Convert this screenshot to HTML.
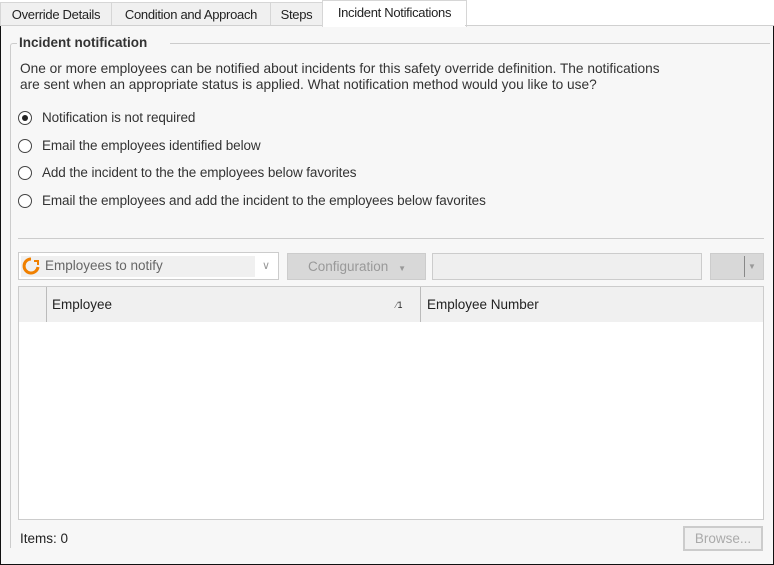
<!DOCTYPE html>
<html><head><style>
body{margin:0;width:774px;height:565px;overflow:hidden;background:#fff;font-family:"Liberation Sans",sans-serif;font-size:13.7px;color:#222;position:relative}
.a{position:absolute}
.tab{position:absolute;top:2px;height:23px;background:#f0f0f0;border:1px solid #d6d6d6;border-bottom:none;line-height:23px;text-align:center;font-size:13px;color:#222;letter-spacing:-0.3px}
.panel{position:absolute;left:0;top:25px;width:772px;height:538px;background:#f7f7f7;border:1px solid #111;border-top:1px solid #d0d0d0}
.rb{position:absolute;left:18px;width:14px;height:14px;border:1px solid #444;border-radius:50%;background:#fff;box-sizing:border-box}
.rt{position:absolute;left:42px;font-size:13.5px;color:#333;letter-spacing:-0.1px}
</style></head><body>
<div class="panel"></div>
<div class="a" style="left:0;top:0;width:774px;height:26px;background:#fff"></div>
<div class="tab" style="left:0;width:110px">Override Details</div>
<div class="tab" style="left:111px;width:158px">Condition and Approach</div>
<div class="tab" style="left:270px;width:51px">Steps</div>
<div class="tab" style="left:322px;width:143px;top:0;height:26px;background:#fff;line-height:24px">Incident Notifications</div>
<div class="a" style="left:0;top:25px;width:322px;border-top:1px solid #d0d0d0"></div>
<div class="a" style="left:465px;top:25px;width:309px;border-top:1px solid #d0d0d0"></div>
<div class="a" style="left:773px;top:26px;width:1px;height:539px;background:#111"></div>
<div class="a" style="left:0;top:26px;width:1px;height:539px;background:#111"></div>
<div class="a" style="left:0;top:564px;width:774px;height:1px;background:#111"></div>
<div class="a" style="left:10px;top:43px;width:6px;height:6px;border-left:1px solid #ccc;border-top:1px solid #ccc;border-top-left-radius:3px"></div>
<div class="a" style="left:10px;top:48px;width:1px;height:500px;background:#ccc"></div>
<div class="a" style="left:170px;top:43px;width:600px;height:1px;background:#ccc"></div>
<div class="a" style="left:19px;top:35px;font-weight:bold;font-size:13.5px;color:#333">Incident notification</div>
<div class="a" style="left:20px;top:61px;line-height:16px;color:#333;width:700px;font-size:13.7px">One or more employees can be notified about incidents for this safety override definition. The notifications<br>are sent when an appropriate status is applied. What notification method would you like to use?</div>
<div class="rb" style="top:111px"><div class="a" style="left:3px;top:3px;width:6px;height:6px;border-radius:50%;background:#222"></div></div>
<div class="rt" style="top:110px">Notification is not required</div>
<div class="rb" style="top:139px"></div><div class="rt" style="top:138px">Email the employees identified below</div>
<div class="rb" style="top:166px"></div><div class="rt" style="top:165px">Add the incident to the the employees below favorites</div>
<div class="rb" style="top:194px"></div><div class="rt" style="top:193px">Email the employees and add the incident to the employees below favorites</div>
<div class="a" style="left:18px;top:238px;width:746px;height:1px;background:#ccc"></div>
<div class="a" style="left:18px;top:252px;width:261px;height:28px;background:#fff;border:1px solid #ccc;box-sizing:border-box"></div>
<div class="a" style="left:21px;top:256px;width:234px;height:21px;background:#f0f0f0"></div>
<svg class="a" style="left:22px;top:257px" width="20" height="18"><path d="M9 2 A7 7 0 1 0 16 10" fill="none" stroke="#f08000" stroke-width="3"/><path d="M12 4 l4 0 0 4" fill="none" stroke="#f08000" stroke-width="2"/></svg>
<div class="a" style="left:45px;top:258px;color:#666;font-size:13.5px">Employees to notify</div>
<div class="a" style="left:262px;top:259px;color:#999;font-size:11px">&#8744;</div>
<div class="a" style="left:287px;top:253px;width:139px;height:27px;background:#d8d8d8;border:1px solid #ccc;box-sizing:border-box;color:#999;line-height:26px;padding-left:20px;font-size:13.5px">Configuration <span style="font-size:8px;margin-left:6px">&#9660;</span></div>
<div class="a" style="left:432px;top:253px;width:270px;height:27px;background:#efefef;border:1px solid #ccc;box-sizing:border-box"></div>
<div class="a" style="left:710px;top:253px;width:54px;height:27px;background:#d8d8d8;border:1px solid #ccc;box-sizing:border-box"></div>
<div class="a" style="left:744px;top:256px;width:1px;height:21px;background:#888"></div>
<div class="a" style="left:748px;top:262px;font-size:8px;color:#999">&#9660;</div>
<div class="a" style="left:18px;top:286px;width:746px;height:234px;background:#fff;border:1px solid #ccc;box-sizing:border-box"></div>
<div class="a" style="left:19px;top:287px;width:744px;height:35px;background:#f0f0f0"></div>
<div class="a" style="left:46px;top:287px;width:1px;height:35px;background:#bbb"></div>
<div class="a" style="left:420px;top:287px;width:1px;height:35px;background:#bbb"></div>
<div class="a" style="left:52px;top:297px;color:#222;font-size:13.5px">Employee</div>
<div class="a" style="left:396px;top:300px;font-size:9px;color:#666">&#8260;<span style="color:#222">1</span></div>
<div class="a" style="left:427px;top:297px;color:#222;font-size:13.5px">Employee Number</div>
<div class="a" style="left:20px;top:531px;color:#222;font-size:13.5px">Items: 0</div>
<div class="a" style="left:683px;top:526px;width:80px;height:25px;background:#f0f0f0;border:2px solid #ccc;box-sizing:border-box;color:#aaa;line-height:21px;text-align:center;font-size:13.5px">Browse...</div>
</body></html>
